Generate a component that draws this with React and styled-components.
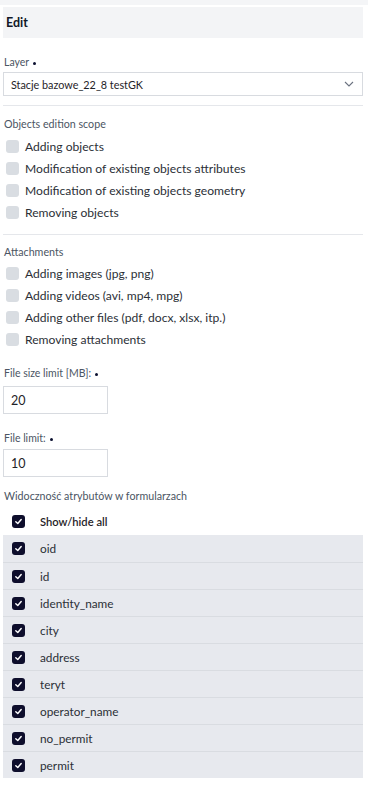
import React from "react";
import styled, { createGlobalStyle } from "styled-components";

const Global = createGlobalStyle`
  *, *::before, *::after { box-sizing: border-box; }
  html, body { margin: 0; padding: 0; background: #fff; }
  body { font-family: "Lato", "Noto Sans", sans-serif; color: #222; }
`;

const Page = styled.div`
  width: 368px;
  display: flex;
  flex-direction: column;
`;

const TopStrip = styled.div`
  height: 5px;
  background: #f4f5f7;
  margin-bottom: 2px;
`;

const Panel = styled.div`
  padding: 0 5px 0 3px;
  display: flex;
  flex-direction: column;
`;

const Header = styled.div`
  height: 31px;
  background: #f3f4f6;
  display: flex;
  align-items: center;
  padding-left: 3px;
  font-size: 12.5px;
  font-weight: 700;
  color: #111827;
`;

const Field = styled.div`
  display: flex;
  flex-direction: column;
  padding-top: ${(p) => p.$top || 0}px;
`;

const Label = styled.div`
  display: flex;
  align-items: center;
  gap: 4px;
  font-size: 10.5px;
  color: #4b5563;
  line-height: 14px;
  padding-left: 1px;
  margin-bottom: ${(p) => p.$mb || 3}px;
`;

const Dot = styled.span`
  width: 3px;
  height: 3px;
  border-radius: 50%;
  background: #0b1030;
  margin-top: 2px;
`;

const SelectBox = styled.div`
  height: 24px;
  border: 1px solid #d8dbe0;
  display: flex;
  align-items: center;
  justify-content: space-between;
  padding: 0 8px 0 7px;
  font-size: 10.8px;
  color: #1f2328;
`;

const Divider = styled.div`
  height: 1px;
  background: #e5e7eb;
  margin-top: ${(p) => p.$top || 0}px;
`;

const Section = styled.div`
  display: flex;
  flex-direction: column;
  padding-top: ${(p) => p.$top || 0}px;
`;

const SectionTitle = styled.div`
  font-size: 10.7px;
  color: #4b5563;
  line-height: 15px;
  padding-left: 1px;
  margin-bottom: ${(p) => p.$mb || 0}px;
`;

const CheckRow = styled.label`
  display: flex;
  align-items: center;
  height: 22px;
  gap: 6px;
  padding-left: 3px;
  font-size: 12.1px;
  color: #2b2f36;
`;

const EmptyBox = styled.span`
  width: 13px;
  height: 13px;
  border-radius: 3px;
  background: #d9dde2;
  flex-shrink: 0;
`;

const NumberInput = styled.div`
  width: 105px;
  height: 28px;
  border: 1px solid #d8dbe0;
  display: flex;
  align-items: center;
  padding-left: 7px;
  font-size: 12.5px;
  color: #1f2328;
`;

const AllRow = styled.div`
  display: flex;
  align-items: center;
  height: 27px;
  padding-left: 9px;
  gap: 15px;
  font-size: 11.2px;
  font-weight: 600;
  color: #1f2328;
`;

const List = styled.div`
  display: flex;
  flex-direction: column;
  background: #e7e9ee;
`;

const ListRow = styled.div`
  height: 27px;
  display: flex;
  align-items: center;
  gap: 15px;
  padding-left: 9px;
  font-size: 11.8px;
  color: #2b2f36;
  border-top: ${(p) => (p.$first ? "none" : "1px solid #d9dce1")};
`;

const CheckedBox = styled.span`
  width: 13px;
  height: 13px;
  border-radius: 3px;
  background: #0e0e2c;
  display: flex;
  align-items: center;
  justify-content: center;
  flex-shrink: 0;
`;

const Checked = () => (
  <CheckedBox>
    <svg width="9" height="9" viewBox="0 0 10 10">
      <path d="M2 5.2 L4.2 7.3 L8 2.8" fill="none" stroke="#fff" strokeWidth="1.6" strokeLinecap="round" strokeLinejoin="round" />
    </svg>
  </CheckedBox>
);

const Chevron = () => (
  <svg width="10" height="6" viewBox="0 0 10 6">
    <path d="M1 1 L5 5 L9 1" fill="none" stroke="#6b7280" strokeWidth="1.1" />
  </svg>
);

const scope = [
  "Adding objects",
  "Modification of existing objects attributes",
  "Modification of existing objects geometry",
  "Removing objects",
];

const attachments = [
  "Adding images (jpg, png)",
  "Adding videos (avi, mp4, mpg)",
  "Adding other files (pdf, docx, xlsx, itp.)",
  "Removing attachments",
];

const attrs = ["oid", "id", "identity_name", "city", "address", "teryt", "operator_name", "no_permit", "permit"];

export default function App() {
  return (
    <Page>
      <Global />
      <TopStrip />
      <Panel>
        <Header>Edit</Header>
        <Field $top={17}>
          <Label>
            Layer <Dot />
          </Label>
          <SelectBox>
            <span>Stacje bazowe_22_8 testGK</span>
            <Chevron />
          </SelectBox>
        </Field>
        <Divider $top={9} />
        <Section $top={10}>
          <SectionTitle $mb={4}>Objects edition scope</SectionTitle>
          {scope.map((s) => (
            <CheckRow key={s}>
              <EmptyBox />
              {s}
            </CheckRow>
          ))}
        </Section>
        <Divider $top={11} />
        <Section $top={9}>
          <SectionTitle $mb={3}>Attachments</SectionTitle>
          {attachments.map((s) => (
            <CheckRow key={s}>
              <EmptyBox />
              {s}
            </CheckRow>
          ))}
        </Section>
        <Field $top={16}>
          <Label $mb={6}>
            File size limit [MB]: <Dot />
          </Label>
          <NumberInput>20</NumberInput>
        </Field>
        <Field $top={17}>
          <Label $mb={4}>
            File limit: <Dot />
          </Label>
          <NumberInput>10</NumberInput>
        </Field>
        <Section $top={11}>
          <SectionTitle $mb={5}>Widoczność atrybutów w formularzach</SectionTitle>
          <AllRow>
            <Checked />
            Show/hide all
          </AllRow>
          <List>
            {attrs.map((a, i) => (
              <ListRow key={a} $first={i === 0}>
                <Checked />
                {a}
              </ListRow>
            ))}
          </List>
        </Section>
      </Panel>
    </Page>
  );
}
